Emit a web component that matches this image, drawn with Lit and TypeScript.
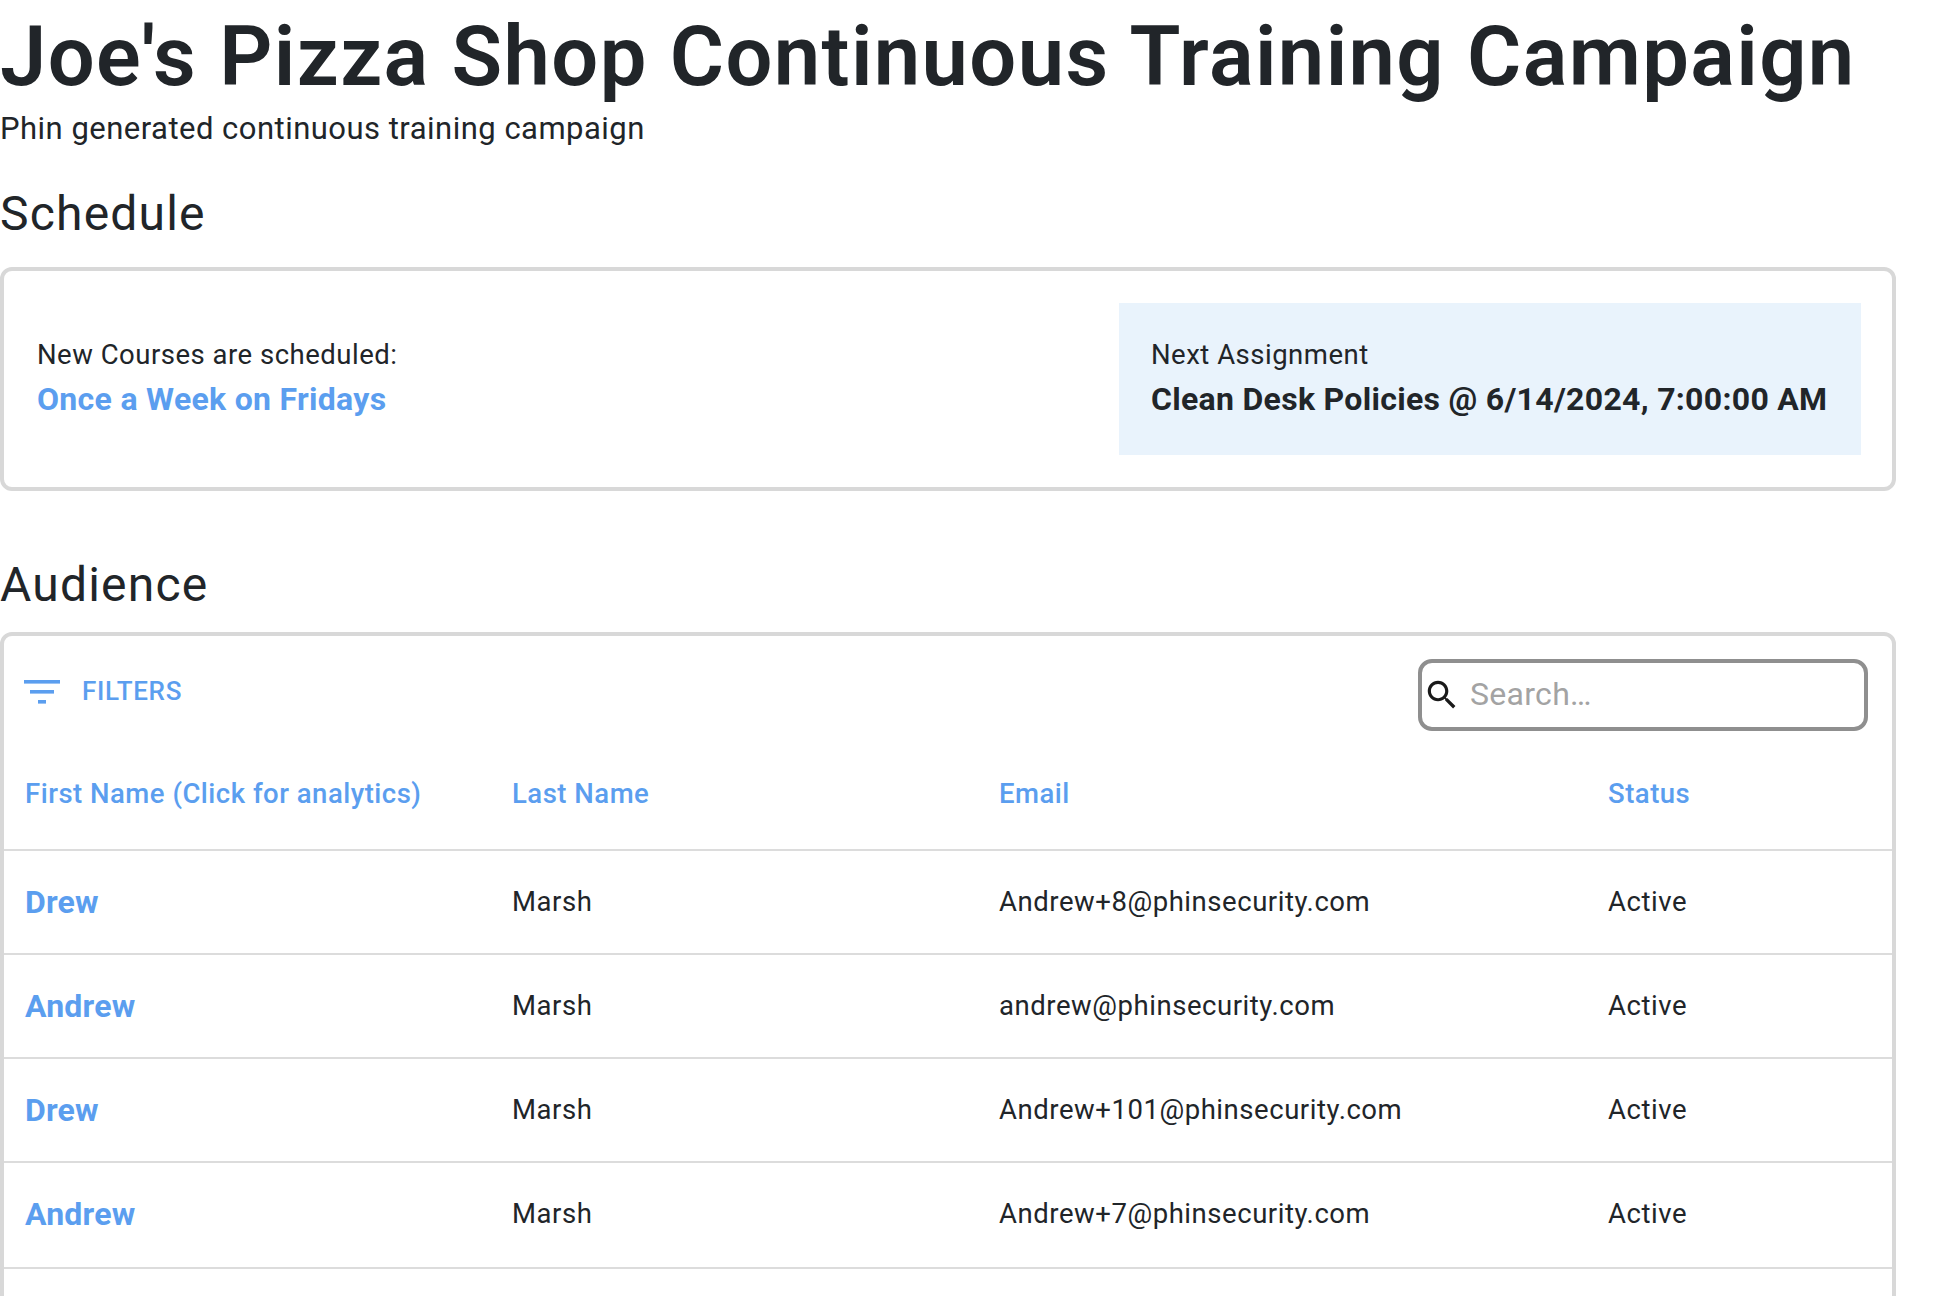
import { LitElement, html, css } from "lit";
import { customElement } from "lit/decorators.js";

const rows = [
  ["Drew", "Marsh", "Andrew+8@phinsecurity.com", "Active"],
  ["Andrew", "Marsh", "andrew@phinsecurity.com", "Active"],
  ["Drew", "Marsh", "Andrew+101@phinsecurity.com", "Active"],
  ["Andrew", "Marsh", "Andrew+7@phinsecurity.com", "Active"],
];

@customElement("app-root")
export class AppRoot extends LitElement {
  static styles = css`
    :host {
      display: block;
      width: 1950px;
      height: 1296px;
      overflow: hidden;
      background: #fff;
      color: #212529;
      font-family: Roboto, "Liberation Sans", sans-serif;
    }
    .page { width: 1896px; }
    h1 {
      margin: 0;
      padding-top: 15px;
      font-size: 83px;
      line-height: 84px;
      font-weight: 600;
      letter-spacing: 1.4px;
      white-space: nowrap;
    }
    .sub { margin-top: 10px; font-size: 31px; line-height: 40px; letter-spacing: 0.48px; }
    h2 {
      margin: 0;
      font-size: 48px;
      line-height: 56px;
      font-weight: 400;
      letter-spacing: 1.2px;
    }
    .h-schedule { margin-top: 37px; }
    .card {
      box-sizing: border-box;
      border: 4px solid #d8d8d8;
      border-radius: 12px;
      background: #fff;
    }
    .schedule {
      margin-top: 25px;
      height: 224px;
      display: flex;
      align-items: center;
      justify-content: space-between;
      padding: 0 31px 0 33px;
    }
    .left { padding-bottom: 3px; }
    .label { font-size: 27.5px; line-height: 34px; letter-spacing: 0.5px; }
    .value { margin-top: 8px; font-size: 32px; line-height: 38px; font-weight: 700; letter-spacing: 0.3px; }
    .blue { color: #5b9eef; }
    .next {
      box-sizing: border-box;
      width: 742px;
      height: 152px;
      margin-bottom: 1px;
      padding: 35px 0 0 32px;
      background: #e9f3fc;
    }
    .h-audience { margin-top: 66px; }
    .audience { margin-top: 19px; height: 800px; }
    .toolbar {
      display: flex;
      justify-content: space-between;
      align-items: flex-start;
      height: 123px;
      padding: 23px 24px 0 20px;
      box-sizing: border-box;
    }
    .filters {
      display: flex;
      align-items: center;
      gap: 22px;
      margin-top: 17px;
      color: #5b9eef;
      font-size: 26px;
      font-weight: 500;
      letter-spacing: 0.7px;
      line-height: 30px;
    }
    .filters svg { display: block; }
    .filters span { margin-bottom: 2px; }
    .search {
      box-sizing: border-box;
      width: 450px;
      height: 72px;
      border: 4px solid #8f8f8f;
      border-radius: 14px;
      display: flex;
      align-items: center;
      padding-left: 1px;
      gap: 9px;
      color: #a3a3a3;
      font-size: 32px;
      letter-spacing: 0.3px;
    }
    .search svg { display: block; flex: none; }
    .search span { margin-bottom: 2px; }
    .row {
      display: grid;
      grid-template-columns: 487px 487px 609px 1fr;
      align-items: center;
      box-sizing: border-box;
      height: 104px;
      padding-left: 21px;
      padding-bottom: 1px;
      border-bottom: 2px solid #dcdcdc;
      font-size: 27.5px;
      letter-spacing: 0.55px;
    }
    .head { height: 92px; padding-bottom: 22px; font-weight: 500; color: #5b9eef; letter-spacing: 0.5px; }
    .tall { height: 106px; padding-bottom: 3px; }
    .first { font-size: 32px; font-weight: 700; color: #5b9eef; letter-spacing: 0.2px; }
    .empty { border-bottom: none; }
  `;

  render() {
    return html`<div class="page">
      <h1>Joe's Pizza Shop Continuous Training Campaign</h1>
      <div class="sub">Phin generated continuous training campaign</div>
      <h2 class="h-schedule">Schedule</h2>
      <div class="card schedule">
        <div class="left">
          <div class="label">New Courses are scheduled:</div>
          <div class="value blue">Once a Week on Fridays</div>
        </div>
        <div class="next">
          <div class="label">Next Assignment</div>
          <div class="value">Clean Desk Policies @ 6/14/2024, 7:00:00 AM</div>
        </div>
      </div>
      <h2 class="h-audience">Audience</h2>
      <div class="card audience">
        <div class="toolbar">
          <div class="filters">
            <svg width="36" height="24" viewBox="0 0 36 24" fill="#5b9eef">
              <rect x="0" y="0" width="36" height="3.6"></rect>
              <rect x="6" y="10" width="24" height="3.6"></rect>
              <rect x="14" y="20" width="8" height="3.6"></rect>
            </svg>
            <span>FILTERS</span>
          </div>
          <div class="search">
            <svg width="38" height="38" viewBox="0 0 24 24" fill="#1a1a1a">
              <path d="M15.5 14h-.79l-.28-.27C15.41 12.59 16 11.11 16 9.5 16 5.91 13.09 3 9.5 3S3 5.91 3 9.5 5.91 16 9.5 16c1.61 0 3.09-.59 4.23-1.57l.27.28v.79l5 4.99L20.49 19l-4.99-5zm-6 0C7.01 14 5 11.99 5 9.5S7.01 5 9.5 5 14 7.01 14 9.5 11.99 14 9.5 14z"></path>
            </svg>
            <span>Search…</span>
          </div>
        </div>
        <div class="row head">
          <div>First Name (Click for analytics)</div>
          <div>Last Name</div>
          <div>Email</div>
          <div>Status</div>
        </div>
        ${rows.map(
          (r, i) => html`<div class="row ${i === rows.length - 1 ? "tall" : ""}">
            <div class="first">${r[0]}</div>
            <div>${r[1]}</div>
            <div>${r[2]}</div>
            <div>${r[3]}</div>
          </div>`
        )}
        <div class="row empty"></div>
      </div>
    </div>`;
  }
}
